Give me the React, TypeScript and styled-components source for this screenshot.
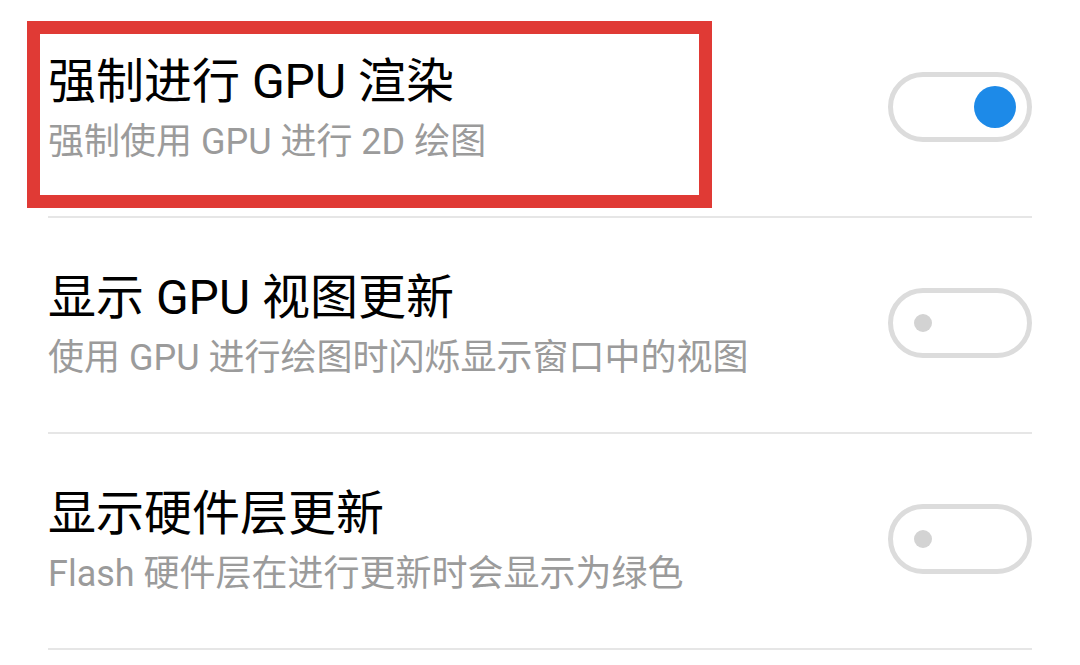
import React from "react";
import styled, { createGlobalStyle } from "styled-components";

const GlobalStyle = createGlobalStyle`
  html, body {
    margin: 0;
    padding: 0;
    background: #ffffff;
  }
  body {
    font-family: Roboto, "Noto Sans CJK SC", sans-serif;
    -webkit-font-smoothing: antialiased;
  }
`;

const Page = styled.div`
  width: 1080px;
  height: 665px;
  overflow: hidden;
  background: #ffffff;
  padding: 2px 48px 0 48px;
  box-sizing: border-box;
  display: flex;
  flex-direction: column;
`;

const Row = styled.div`
  position: relative;
  height: 216px;
  box-sizing: border-box;
  border-bottom: 2px solid #e6e6e6;
  display: flex;
  align-items: center;
  justify-content: space-between;
`;

const TextBlock = styled.div`
  display: flex;
  flex-direction: column;
  padding-top: 3px;
`;

const Title = styled.div`
  font-size: 48px;
  line-height: 60px;
  color: #000000;
  font-weight: 400;
  white-space: nowrap;
`;

const Subtitle = styled.div`
  font-size: 36px;
  line-height: 54px;
  margin-top: 3px;
  color: #9b9b9b;
  white-space: nowrap;
`;

const Toggle = styled.div<{ $on: boolean }>`
  width: 144px;
  height: 70px;
  margin-bottom: 4px;
  box-sizing: border-box;
  border: 5px solid #dcdcdc;
  border-radius: 35px;
  display: flex;
  align-items: center;
  justify-content: ${(p) => (p.$on ? "flex-end" : "flex-start")};
  padding: ${(p) => (p.$on ? "0 11px" : "0 21px")};
  flex-shrink: 0;
`;

const Knob = styled.div<{ $on: boolean }>`
  width: ${(p) => (p.$on ? "42px" : "18px")};
  height: ${(p) => (p.$on ? "42px" : "18px")};
  border-radius: 50%;
  background: ${(p) => (p.$on ? "#1d8ae8" : "#d3d3d3")};
`;

const Highlight = styled.div`
  position: absolute;
  left: -21px;
  top: 19px;
  width: 685px;
  height: 187px;
  box-sizing: border-box;
  border: 13px solid #e03a35;
  pointer-events: none;
`;

type Item = { title: string; desc: string; on: boolean; highlight?: boolean };

const items: Item[] = [
  { title: "强制进行 GPU 渲染", desc: "强制使用 GPU 进行 2D 绘图", on: true, highlight: true },
  { title: "显示 GPU 视图更新", desc: "使用 GPU 进行绘图时闪烁显示窗口中的视图", on: false },
  { title: "显示硬件层更新", desc: "Flash 硬件层在进行更新时会显示为绿色", on: false },
];

export default function App() {
  return (
    <>
      <GlobalStyle />
      <Page>
        {items.map((it) => (
          <Row key={it.title}>
            <TextBlock>
              <Title>{it.title}</Title>
              <Subtitle>{it.desc}</Subtitle>
            </TextBlock>
            <Toggle $on={it.on}>
              <Knob $on={it.on} />
            </Toggle>
            {it.highlight && <Highlight />}
          </Row>
        ))}
      </Page>
    </>
  );
}
